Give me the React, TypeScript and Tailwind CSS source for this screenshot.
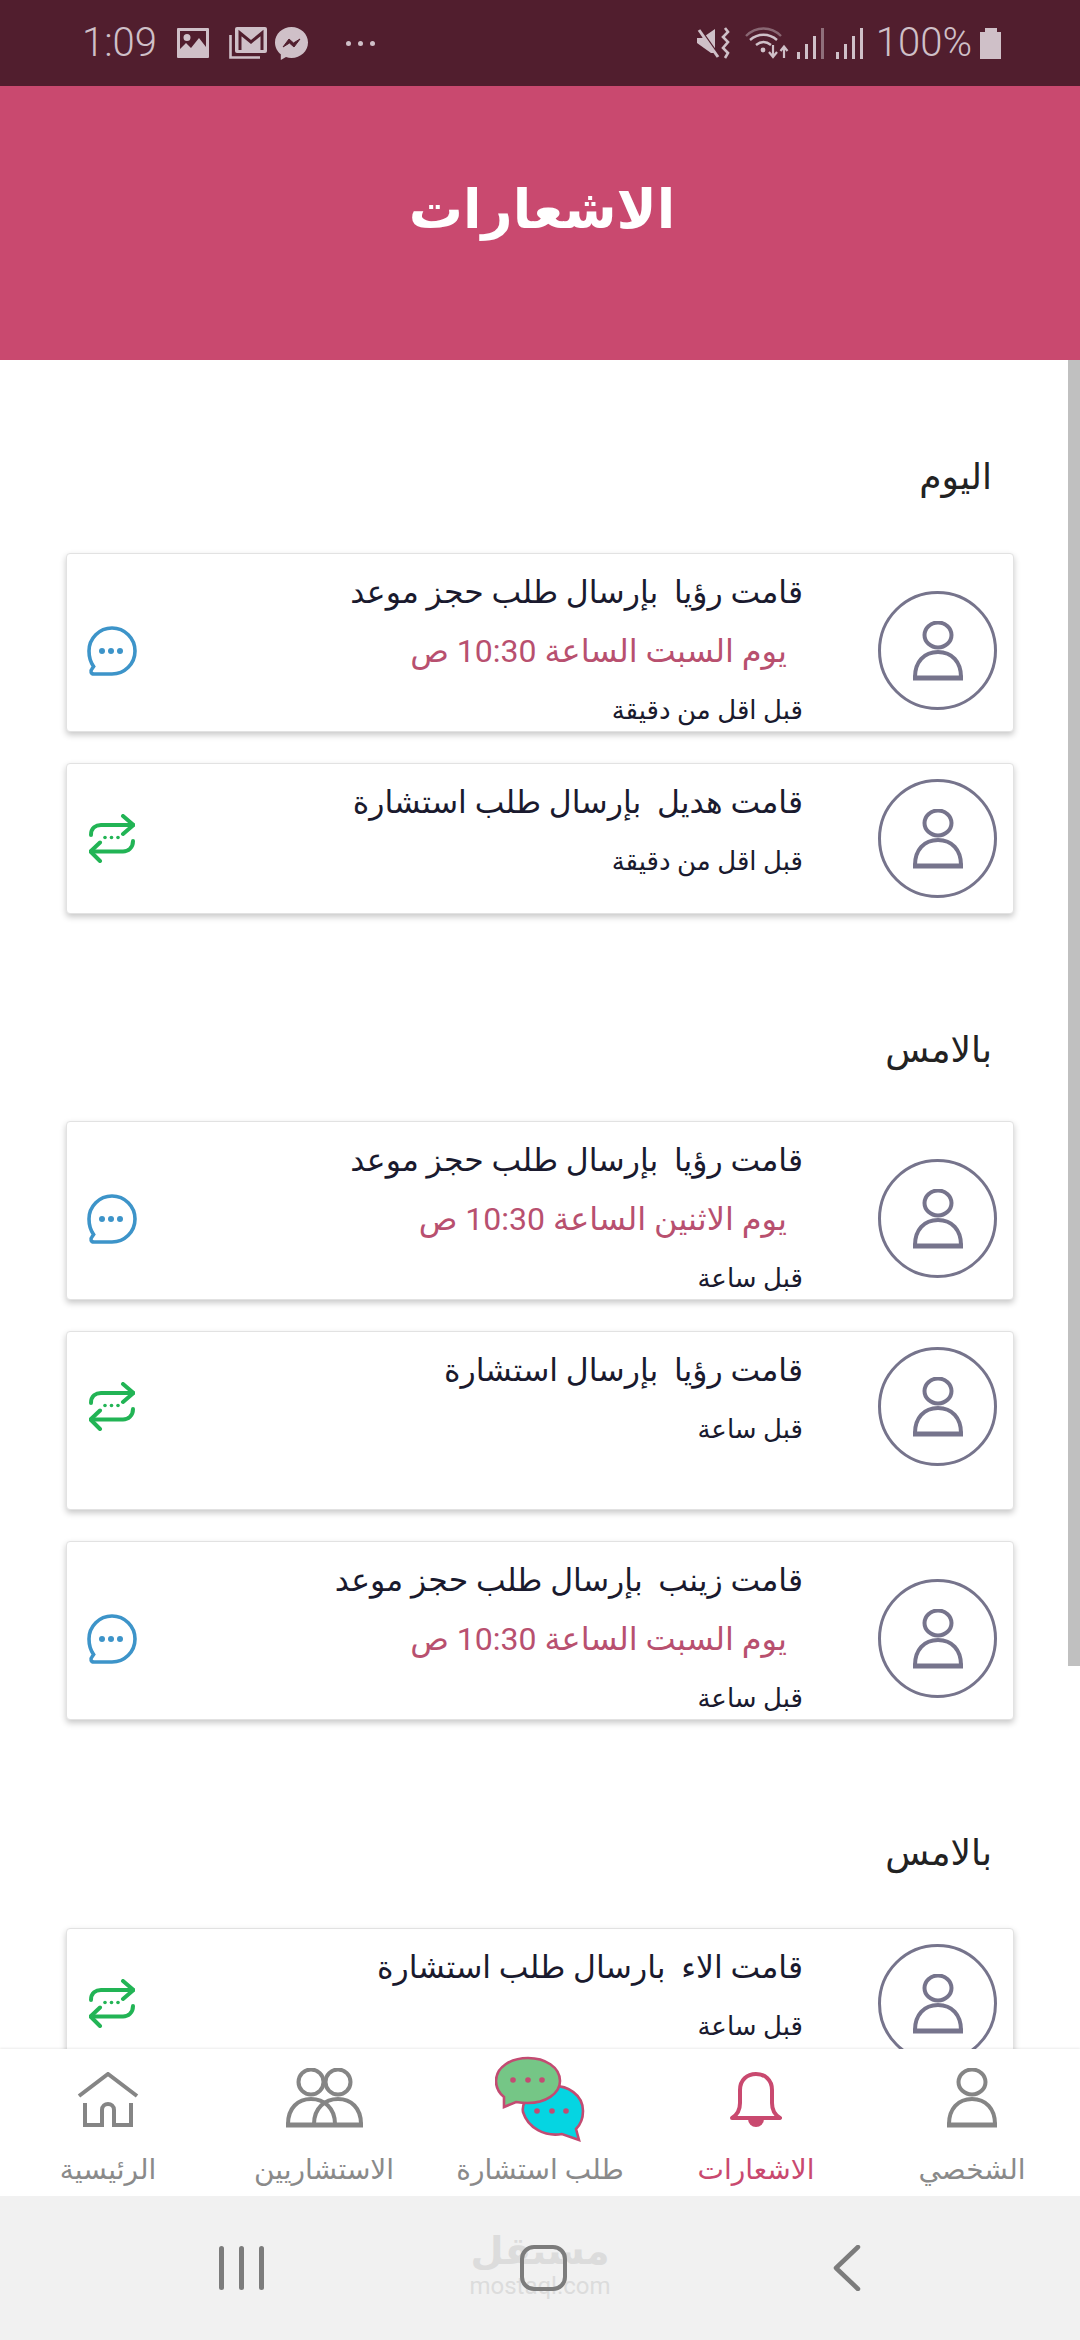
import React from 'react'

const FONT = '"Roboto", "Noto Sans", "DejaVu Sans", sans-serif'

function PersonIcon({ className, thick = 4 }: { className?: string; thick?: number }) {
  return (
    <svg className={className} viewBox="0 0 52 60" fill="none" stroke="currentColor" strokeWidth="4">
      <ellipse cx="26" cy="14" rx="13.5" ry="12.5" />
      <path d="M3 56C3 41 12 31 26 31C40 31 49 41 49 56" />
      <path d="M1 57H51" strokeWidth={thick} />
    </svg>
  )
}

function ChatIcon() {
  return (
    <svg className="w-[50px] h-[50px] text-[#3d94c9]" viewBox="0 0 50 50" fill="none" stroke="currentColor" strokeWidth="3.6">
      <path d="M25 2C37.7 2 48 12.3 48 25C48 37.7 37.7 48 25 48H7C4 48 3 45 4.8 43.2L6.6 40.6C3.8 36.6 2 31 2 25C2 12.3 12.3 2 25 2Z" />
      <circle cx="15" cy="25" r="3" fill="currentColor" stroke="none" />
      <circle cx="24" cy="25" r="3" fill="currentColor" stroke="none" />
      <circle cx="33" cy="25" r="3" fill="currentColor" stroke="none" />
    </svg>
  )
}

function RepeatIcon() {
  return (
    <svg className="w-[46px] h-[49px] text-[#22b455]" viewBox="0 0 46 49" fill="none" stroke="currentColor" strokeWidth="4" strokeLinecap="round" strokeLinejoin="round">
      <path d="M2 21C2 14 7 11 12 11H44" />
      <path d="M34 2L44.5 11L34 20" />
      <path d="M44 27C44 34 39 37.5 34 37.5H2" />
      <path d="M11 28.5L1.5 37.5L11 47" />
      <circle cx="16" cy="23.5" r="1.8" fill="currentColor" stroke="none" />
      <circle cx="22.5" cy="23.5" r="1.8" fill="currentColor" stroke="none" />
      <circle cx="29" cy="23.5" r="1.8" fill="currentColor" stroke="none" />
    </svg>
  )
}

type Notice = {
  title: string
  when?: string
  ago: string
  kind: 'chat' | 'repeat'
  tall: boolean
}

function NoticeCard({ title, when, ago, kind, tall }: Notice) {
  const iconTop = when ? 'mt-[37px]' : 'mt-[15px]'
  return (
    <div className={`flex items-start bg-white rounded-[4px] border border-[#e2e2e2] shadow-[0_3px_6px_rgba(0,0,0,0.22)] ps-4 pe-[20px] shrink-0 ${tall ? 'h-[179px]' : 'h-[151px]'}`}>
      <div className={`w-[119px] h-[119px] rounded-full border-[3px] border-[#76748c] flex items-center justify-center shrink-0 text-[#76748c] ${iconTop}`}>
        <PersonIcon className="w-[52px] h-[60px]" thick={5} />
      </div>
      <div className="flex-1 flex flex-col ms-[75px] pt-[9px]">
        <p className="h-[59px] leading-[59px] text-[31.5px] text-[#1a1a2e] whitespace-pre">{title}</p>
        {when && <p className="h-[59px] leading-[59px] text-[32px] text-[#b8506f] whitespace-pre pr-[16px]">{when}</p>}
        <p className="h-[59px] leading-[59px] text-[26px] text-[#1a1a2e] whitespace-pre">{ago}</p>
      </div>
      <div className={`w-[50px] h-[119px] flex items-center justify-center shrink-0 ${iconTop}`}>
        {kind === 'chat' ? <ChatIcon /> : <RepeatIcon />}
      </div>
    </div>
  )
}

function StatusBar() {
  return (
    <div dir="ltr" className="h-[86px] bg-[#511e2e] text-[#cfc0c8] flex items-center pl-[82px] pr-[79px] shrink-0">
      <span className="text-[40px] font-light leading-none w-[95px]">1:09</span>
      {/* gallery */}
      <svg className="w-[32px] h-[30px]" viewBox="0 0 32 30">
        <path fillRule="evenodd" fill="currentColor" d="M1 0H31A1 1 0 0 1 32 1V29A1 1 0 0 1 31 30H1A1 1 0 0 1 0 29V1A1 1 0 0 1 1 0ZM3 3V21L9 15L14 20L22 10L29 19V3ZM10 6A3.5 3.5 0 1 0 10 13A3.5 3.5 0 1 0 10 6Z" />
      </svg>
      {/* gmail stack */}
      <svg className="w-[38px] h-[32px] ml-[20px]" viewBox="0 0 38 32" fill="none">
        <path d="M1.5 8V30.5H31" stroke="currentColor" strokeWidth="2.6" />
        <rect x="6" y="0" width="32" height="26" rx="2" fill="currentColor" />
        <path d="M11 23V6L22 15L33 6V23" stroke="#511e2e" strokeWidth="3" />
      </svg>
      {/* messenger */}
      <svg className="w-[33px] h-[33px] ml-[8px]" viewBox="0 0 33 33">
        <path fill="currentColor" d="M16.5 0C7.4 0 0 6.9 0 15.5C0 20.3 2.3 24.5 5.8 27.3V33L11 30C12.7 30.6 14.6 31 16.5 31C25.6 31 33 24.1 33 15.5C33 6.9 25.6 0 16.5 0Z" />
        <path d="M8 20L14 12L18.5 16L25 12L19 20L14.5 16Z" fill="#511e2e" stroke="#511e2e" strokeWidth="1" />
      </svg>
      <div className="flex gap-[7px] ml-[38px]">
        <span className="w-[5px] h-[5px] rounded-full bg-current" />
        <span className="w-[5px] h-[5px] rounded-full bg-current" />
        <span className="w-[5px] h-[5px] rounded-full bg-current" />
      </div>
      <div className="flex-1" />
      {/* mute + vibrate */}
      <svg className="w-[33px] h-[32px]" viewBox="0 0 33 32" fill="none">
        <path fill="currentColor" d="M0 11H5L18 2V26L14 26L0 16Z" />
        <path d="M2 1L21 28" stroke="#511e2e" strokeWidth="3" />
        <path d="M2 3L21 30" stroke="currentColor" strokeWidth="3" />
        <path d="M28 1L31 5L26 10L31 15L26 21L31 26L28 31" stroke="currentColor" strokeWidth="2.6" />
      </svg>
      {/* wifi */}
      <svg className="w-[44px] h-[34px] ml-[15px]" viewBox="0 0 44 34" fill="none" stroke="currentColor">
        <path d="M1 10C11 0 26 0 36 10" strokeWidth="2.4" opacity="0.45" />
        <path d="M5 14C13 7 24 7 32 14" strokeWidth="2.4" />
        <path d="M11 19C16 15 21 15 26 19" strokeWidth="2.4" />
        <circle cx="18" cy="24" r="2.4" fill="currentColor" stroke="none" />
        <path d="M28 19V30M24 26L28 31L32 26" strokeWidth="2.2" />
        <path d="M39 32V21M35.5 25L39 20.5L42.5 25" strokeWidth="2.2" />
      </svg>
      {/* signal */}
      <div className="flex items-end gap-[5px] h-[32px] ml-[8px]">
        <span className="w-[3px] h-[7px] bg-current" />
        <span className="w-[3px] h-[15px] bg-current" />
        <span className="w-[3px] h-[23px] bg-current" />
        <span className="w-[3px] h-[31px] bg-current opacity-50" />
      </div>
      <div className="flex items-end gap-[5px] h-[32px] ml-[12px]">
        <span className="w-[3px] h-[7px] bg-current" />
        <span className="w-[3px] h-[15px] bg-current" />
        <span className="w-[3px] h-[23px] bg-current" />
        <span className="w-[3px] h-[31px] bg-current" />
      </div>
      <span className="text-[40px] font-light leading-none ml-[13px]">100%</span>
      {/* battery */}
      <div className="flex flex-col items-center ml-[8px]">
        <span className="w-[12px] h-[4px] bg-current" />
        <span className="w-[21px] h-[27px] bg-current" />
      </div>
    </div>
  )
}

function BottomNav() {
  return (
    <nav dir="rtl" className="h-[147px] bg-white grid grid-cols-5 shrink-0 relative shadow-[0_-1px_2px_rgba(0,0,0,0.08)]">
      <NavItem label="الشخصي">
        <PersonIcon className="w-[52px] h-[60px] text-[#858585]" thick={5} />
      </NavItem>
      <NavItem label="الاشعارات" active>
        <svg className="w-[52px] h-[56px] text-[#c9496f]" viewBox="0 0 52 56" fill="none" stroke="currentColor" strokeWidth="4">
          <path d="M2 46C7 43 10 38 10 31V18C10 8 17 2 26 2C35 2 42 8 42 18V31C42 38 45 43 50 46Z" strokeLinejoin="round" />
          <path d="M18 47A8 8 0 0 0 34 47Z" fill="currentColor" stroke="none" />
        </svg>
      </NavItem>
      <NavItem label="طلب استشارة">
        <svg className="w-[90px] h-[86px] -mb-[14px]" viewBox="0 0 90 86" stroke="#c34b72" strokeWidth="2.6">
          <path fill="#05d5e2" d="M56 30C73 29 88 39 88 55C88 63 85 69 81 73L84 84L67 78C50 81 33 72 28 56C26 44 40 31 56 30Z" />
          <path fill="#75c686" d="M33 2C50 2 65 11 65 25C65 38 50 47 33 47C28 47 24 46.5 21 46L9 51L9 41C4 37 1 31 1 25C1 11 16 2 33 2Z" />
          <circle cx="18" cy="24" r="2.8" fill="#c34b72" stroke="none" />
          <circle cx="33" cy="24" r="2.8" fill="#c34b72" stroke="none" />
          <circle cx="47" cy="24" r="2.8" fill="#c34b72" stroke="none" />
          <circle cx="42" cy="55" r="2.8" fill="#c34b72" stroke="none" />
          <circle cx="57" cy="55" r="2.8" fill="#c34b72" stroke="none" />
          <circle cx="71" cy="55" r="2.8" fill="#c34b72" stroke="none" />
        </svg>
      </NavItem>
      <NavItem label="الاستشاريين">
        <svg className="w-[79px] h-[60px] text-[#858585]" viewBox="0 0 79 60" fill="none" stroke="currentColor" strokeWidth="4">
          <ellipse cx="26" cy="14" rx="12.5" ry="12.5" />
          <ellipse cx="53" cy="14" rx="12.5" ry="12.5" />
          <path d="M3 56C3 40 13 31 26 31C39 31 50 40 50 56" />
          <path d="M29 56C29 40 40 31 53 31C66 31 76 40 76 56" />
          <path d="M1 57H78" strokeWidth="5" />
        </svg>
      </NavItem>
      <NavItem label="الرئيسية">
        <svg className="w-[62px] h-[56px] text-[#858585]" viewBox="0 0 62 56" fill="none" stroke="currentColor" strokeWidth="4">
          <path d="M2 24L31 2L60 24" />
          <path d="M8 31V53H25V38C25 30 37 30 37 38V53H54V31" />
        </svg>
      </NavItem>
    </nav>
  )
}

function NavItem({ label, active, children }: { label: string; active?: boolean; children: React.ReactNode }) {
  return (
    <div className="flex flex-col items-center">
      <div className="h-[79px] flex items-end justify-center shrink-0">{children}</div>
      <span className={`text-[28px] leading-[40px] mt-[22px] whitespace-nowrap ${active ? 'text-[#c9496f]' : 'text-[#8a8a8a]'}`}>{label}</span>
    </div>
  )
}

function SystemBar() {
  return (
    <div dir="ltr" className="h-[144px] shrink-0 bg-[#f1f1f1] flex items-center justify-center relative text-[#7c7c7c]">
      {/* watermark sits behind the home button */}
      <div className="absolute left-[475px] top-[30px] w-[130px] flex flex-col items-center text-[#dcdcdc] font-bold">
        <span className="text-[38px] leading-[50px]">مستقل</span>
        <span className="text-[24px] leading-[20px] font-normal">mostaql.com</span>
      </div>
      <div className="flex gap-[15px] relative">
        <span className="w-[5px] h-[44px] rounded-full bg-current" />
        <span className="w-[5px] h-[44px] rounded-full bg-current" />
        <span className="w-[5px] h-[44px] rounded-full bg-current" />
      </div>
      <span className="w-[47px] h-[46px] rounded-[14px] border-[4px] border-current ml-[256px] relative" />
      <svg className="w-[28px] h-[46px] ml-[266px] relative" viewBox="0 0 28 46" fill="none" stroke="currentColor" strokeWidth="4.5" strokeLinecap="round" strokeLinejoin="round">
        <path d="M25 2L3 23L25 44" />
      </svg>
    </div>
  )
}

const today: Notice[] = [
  { title: 'قامت رؤيا  بإرسال طلب حجز موعد', when: 'يوم السبت الساعة 10:30 ص', ago: 'قبل اقل من دقيقة', kind: 'chat', tall: true },
  { title: 'قامت هديل  بإرسال طلب استشارة', ago: 'قبل اقل من دقيقة', kind: 'repeat', tall: false },
]

const yesterday: Notice[] = [
  { title: 'قامت رؤيا  بإرسال طلب حجز موعد', when: 'يوم الاثنين الساعة 10:30 ص', ago: 'قبل ساعة', kind: 'chat', tall: true },
  { title: 'قامت رؤيا  بإرسال استشارة', ago: 'قبل ساعة', kind: 'repeat', tall: true },
  { title: 'قامت زينب  بإرسال طلب حجز موعد', when: 'يوم السبت الساعة 10:30 ص', ago: 'قبل ساعة', kind: 'chat', tall: true },
]

const older: Notice[] = [
  { title: 'قامت الاء  بارسال طلب استشارة', ago: 'قبل ساعة', kind: 'repeat', tall: true },
]

function Section({ label, items, className, gap }: { label: string; items: Notice[]; className: string; gap: string }) {
  return (
    <section className={className}>
      <h2 className="h-[60px] leading-[60px] text-[36px] text-[#222] mr-[22px]">{label}</h2>
      <div className={`flex flex-col gap-[31px] ${gap}`}>
        {items.map((n, i) => (
          <NoticeCard key={i} {...n} />
        ))}
      </div>
    </section>
  )
}

export default function App() {
  return (
    <div className="w-[1080px] h-[2340px] flex flex-col bg-white overflow-hidden" style={{ fontFamily: FONT }}>
      <StatusBar />
      <header className="h-[274px] bg-[#c9496f] flex items-center justify-center shrink-0">
        <h1 dir="rtl" className="text-white text-[54px] font-bold pb-[28px] pl-[4px]">الاشعارات</h1>
      </header>
      <main dir="rtl" className="flex-1 min-h-0 relative overflow-hidden px-[66px]">
        <Section label="اليوم" items={today} className="pt-[87px]" gap="mt-[46px]" />
        <Section label="بالامس" items={yesterday} className="pt-[106px]" gap="mt-[41px]" />
        <Section label="بالامس" items={older} className="pt-[103px]" gap="mt-[45px]" />
        {/* scrollbar thumb */}
        <div className="absolute top-0 right-0 w-[12px] h-[1306px] bg-[#c0c0c0]" />
      </main>
      <BottomNav />
      <SystemBar />
    </div>
  )
}
